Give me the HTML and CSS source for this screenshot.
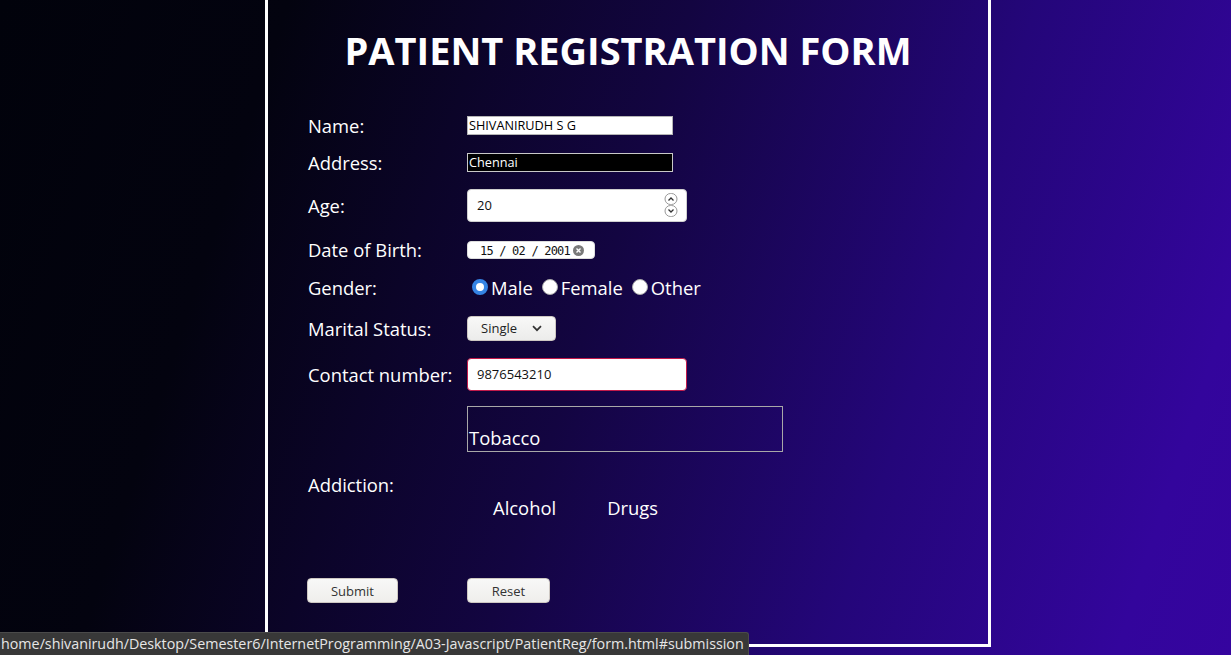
FILE: index.html
```html
<!DOCTYPE html>
<html lang="en">
<head>
<meta charset="utf-8">
<title>Patient Registration Form</title>
<link rel="stylesheet" href="styles.css">
</head>
<body>
<main class="panel">
  <h1 class="title">PATIENT REGISTRATION FORM</h1>
  <form class="form" id="submission">
    <div class="row row-name">
      <label class="label">Name:</label>
      <input class="plain" type="text" value="SHIVANIRUDH S G">
    </div>
    <div class="row row-address">
      <label class="label">Address:</label>
      <input class="plain dark" type="text" value="Chennai">
    </div>
    <div class="row row-age">
      <label class="label">Age:</label>
      <div class="field">
        <span>20</span>
        <svg class="spin" width="14" height="24" viewBox="0 0 14 24">
          <rect x="1" y="0.5" width="12" height="11" rx="5.5" fill="#fff" stroke="#999"/>
          <rect x="1" y="12.5" width="12" height="11" rx="5.5" fill="#fff" stroke="#999"/>
          <path d="M4.5 7.5 L7 5 L9.5 7.5" fill="none" stroke="#333" stroke-width="1.3"/>
          <path d="M4.5 16.5 L7 19 L9.5 16.5" fill="none" stroke="#333" stroke-width="1.3"/>
        </svg>
      </div>
    </div>
    <div class="row row-dob">
      <label class="label">Date of Birth:</label>
      <div class="date">
        <span class="date-text">15 / 02 / 2001</span>
        <svg width="11" height="11" viewBox="0 0 11 11">
          <circle cx="5.5" cy="5.5" r="5.5" fill="#7a7a7a"/>
          <path d="M3.5 3.5 L7.5 7.5 M7.5 3.5 L3.5 7.5" stroke="#fff" stroke-width="1.4"/>
        </svg>
      </div>
    </div>
    <div class="row row-gender">
      <label class="label">Gender:</label>
      <div class="radios">
        <span class="radio checked"></span><span class="opt">Male</span>
        <span class="radio"></span><span class="opt">Female</span>
        <span class="radio"></span><span class="opt">Other</span>
      </div>
    </div>
    <div class="row row-marital">
      <label class="label">Marital Status:</label>
      <div class="select">
        <span>Single</span>
        <svg width="10" height="7" viewBox="0 0 10 7">
          <path d="M1 1.2 L5 5.2 L9 1.2" fill="none" stroke="#333" stroke-width="1.7"/>
        </svg>
      </div>
    </div>
    <div class="row row-contact">
      <label class="label">Contact number:</label>
      <div class="field invalid"><span>9876543210</span></div>
    </div>
    <div class="row row-addiction">
      <label class="label">Addiction:</label>
      <div class="addictions">
        <div class="tobacco">Tobacco</div>
        <div class="others">
          <span class="alcohol">Alcohol</span>
          <span class="drugs">Drugs</span>
        </div>
      </div>
    </div>
    <div class="row row-buttons">
      <div class="btn-cell"><button type="button" class="btn submit">Submit</button></div>
      <button type="button" class="btn reset">Reset</button>
    </div>
  </form>
</main>
<div class="status">home/shivanirudh/Desktop/Semester6/InternetProgramming/A03-Javascript/PatientReg/form.html#submission</div>
</body>
</html>
```
FILE: styles.css
```css
html, body {
  margin: 0;
  padding: 0;
  height: 655px;
  overflow: hidden;
}
body {
  background: linear-gradient(108deg, #01020b 0%, #03030f 20%, #130541 48%, #24067a 72%, #33059c 92%, #35049f 100%);
  font-family: "Open Sans", "Noto Sans", sans-serif;
  color: #fff;
}
.panel {
  box-sizing: border-box;
  width: 726px;
  height: 647px;
  margin-left: 265px;
  border: 3px solid #fff;
  border-top: none;
  padding: 0 0 0 40px;
}
.title {
  margin: 0 0 0 -40px;
  padding-top: 28px;
  height: 78px;
  box-sizing: border-box;
  font-size: 38px;
  line-height: 44px;
  font-weight: 700;
  text-align: center;
  letter-spacing: 0;
}
.form {
  padding-top: 0.5px;
}
.row {
  display: flex;
  align-items: center;
}
.label {
  width: 159px;
  flex: none;
  font-size: 18.4px;
  line-height: 21px;
}
.row-name { height: 37px; margin-top: 28px; }
.row-address { height: 37px; }
.row-age { height: 49px; }
.row-dob { height: 39px; }
.row-gender { height: 37px; }
.row-marital { height: 45px; }
.row-contact { height: 47px; }
.row-addiction { height: 156px; margin-top: 8.5px; align-items: flex-start; }
.row-addiction .label { align-self: center; }
.row-buttons { height: 25px; margin-top: 16px; }

.plain {
  box-sizing: border-box;
  width: 206px;
  height: 19px;
  border: 1px solid #b5b5b5;
  padding: 0 1px;
  margin: 0;
  font-family: "Open Sans", sans-serif;
  font-size: 12.7px;
  color: #000;
  background: #fff;
  outline: none;
}
.plain.dark {
  background: #000;
  color: #fff;
  border-color: #c8c8c8;
}
.field {
  box-sizing: border-box;
  width: 220px;
  height: 33px;
  border: 1px solid #cfcfcf;
  border-radius: 4px;
  background: #fff;
  color: #111;
  display: flex;
  align-items: center;
  justify-content: space-between;
  padding: 0 8px 0 9px;
  font-size: 13px;
}
.field.invalid {
  border-color: #c21a4a;
}
.spin {
  display: block;
}
.date {
  box-sizing: border-box;
  width: 128px;
  height: 18px;
  background: #fff;
  border-radius: 4px;
  border: 1px solid #ddd;
  display: flex;
  align-items: center;
  padding-left: 12px;
  gap: 3px;
  color: #111;
  margin-top: 2px;
}
.date-text {
  font-family: "DejaVu Sans Mono", monospace;
  font-size: 12px;
  line-height: 14px;
  padding-top: 1px;
  letter-spacing: -0.8px;
  white-space: pre;
}
.radios {
  display: flex;
  align-items: center;
  padding-left: 5px;
}
.radio {
  box-sizing: border-box;
  width: 16px;
  height: 16px;
  border-radius: 50%;
  background: #fff;
  border: 1px solid #aaa;
  flex: none;
}
.radio.checked {
  background: #fff;
  border: 4px solid #3584e4;
}
.opt {
  font-size: 18.4px;
  line-height: 21px;
  margin-left: 3px;
  margin-right: 9px;
}
.select {
  box-sizing: border-box;
  width: 89px;
  height: 25px;
  border: 1px solid #cdc7c2;
  border-radius: 4px;
  background: linear-gradient(#f8f8f7, #ececeb);
  color: #222;
  display: flex;
  align-items: center;
  justify-content: space-between;
  padding: 0 13px 0 13px;
  font-size: 13px;
}
.addictions {
  display: flex;
  flex-direction: column;
}
.tobacco {
  box-sizing: border-box;
  width: 316px;
  height: 46px;
  border: 1px solid #a8a8a8;
  display: flex;
  align-items: flex-end;
  padding: 0 0 3px 1px;
  font-size: 18.4px;
  line-height: 21px;
}
.others {
  display: flex;
  font-size: 18.4px;
  line-height: 21px;
  margin-top: 45px;
  padding-left: 26px;
}
.drugs {
  margin-left: 51px;
}
.btn-cell {
  width: 159px;
  flex: none;
  margin-left: -1px;
}
.btn {
  box-sizing: border-box;
  height: 25px;
  border: 1px solid #cdc7c2;
  border-radius: 4px;
  background: linear-gradient(#f8f8f7, #efeeec);
  color: #333;
  font-family: "Open Sans", sans-serif;
  font-size: 13px;
  padding: 0;
  margin: 0;
}
.btn.submit { width: 91px; }
.btn.reset { width: 83px; margin-left: 1px; }

.status {
  position: fixed;
  left: 0;
  bottom: 0;
  width: 749px;
  height: 23px;
  box-sizing: border-box;
  background: #383838;
  border: 1px solid #4a4a4a;
  border-left: none;
  border-bottom: none;
  border-top-right-radius: 3px;
  color: #e6e6e6;
  font-size: 14.3px;
  line-height: 22px;
  white-space: nowrap;
  overflow: hidden;
  padding-left: 1px;
}
```
